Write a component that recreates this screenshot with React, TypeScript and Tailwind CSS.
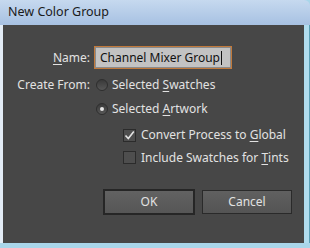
import React from "react";

const U = ({ children }: { children: React.ReactNode }) => (
  <span className="underline underline-offset-[2px] decoration-1">{children}</span>
);

function Radio({ checked }: { checked?: boolean }) {
  return (
    <div className="w-[12px] h-[12px] rounded-full border border-[#2e2e2e] bg-gradient-to-b from-[#3a3a3a] to-[#575757] flex items-center justify-center shrink-0">
      {checked && <div className="w-[4px] h-[4px] rounded-full bg-[#e6e6e6]" />}
    </div>
  );
}

function Check({ checked }: { checked?: boolean }) {
  return (
    <div className="w-[13px] h-[13px] border border-[#2b2b2b] bg-[#4e4e4e] flex items-center justify-center shrink-0">
      {checked && (
        <svg width="11" height="11" viewBox="0 0 11 11">
          <path d="M1.5 5.5 L4.3 8.5 L9.8 1.5" stroke="#e4e4e4" strokeWidth="1.6" fill="none" />
        </svg>
      )}
    </div>
  );
}

export default function App() {
  return (
    <div
      className="w-[310px] h-[248px] flex flex-col bg-[#a9d6ea] text-[12px] text-[#e2e2e2]"
      style={{ fontFamily: '"Noto Sans", "Open Sans", sans-serif' }}
    >
      <div className="h-[25px] shrink-0 flex items-center pl-[8px] bg-gradient-to-b from-[#c6d9ef] to-[#a7c1e2] text-[#1a1a1a] text-[12.5px] rounded-tr-[6px]">
        New Color Group
      </div>
      <div className="flex flex-1 mb-[5px]">
        <div className="w-[3px] bg-[#e3ecf6]" />
        <div className="flex-1 bg-[#474747] flex flex-col pt-[21px]">
          <div className="flex items-center h-[23px]">
            <div className="w-[88px] text-right pr-[1px]">
              <U>N</U>ame:
            </div>
            <div className="ml-[3px] w-[138px] h-[23px] border border-[#c27a3c] p-[1px] bg-[#8a8a8a]">
              <div className="w-full h-full bg-[#c3c3c3] text-[#111] flex items-center pl-[4px]">
                Channel Mixer Group<span className="inline-block w-[1px] h-[14px] bg-[#111] ml-[1px]" />
              </div>
            </div>
          </div>
          <div className="flex items-center h-[24px] mt-[4px]">
            <div className="w-[88px] text-right pr-[1px]">Create From:</div>
            <div className="ml-[5px]">
              <Radio />
            </div>
            <div className="ml-[4px]">
              Selected <U>S</U>watches
            </div>
          </div>
          <div className="flex items-center h-[23px]">
            <div className="w-[88px]" />
            <div className="ml-[5px]">
              <Radio checked />
            </div>
            <div className="ml-[4px]">
              Selected <U>A</U>rtwork
            </div>
          </div>
          <div className="flex items-center h-[22px] mt-[4px] pl-[120px]">
            <Check checked />
            <div className="ml-[5px]">
              Convert Process to <U>G</U>lobal
            </div>
          </div>
          <div className="flex items-center h-[23px] pl-[120px]">
            <Check />
            <div className="ml-[5px]">
              Include Swatches for <U>T</U>ints
            </div>
          </div>
          <div className="flex items-center mt-[20px] pl-[100px]">
            <button className="w-[92px] h-[26px] border-2 border-[#262626] bg-gradient-to-b from-[#626262] to-[#565656] text-[#e2e2e2]">
              OK
            </button>
            <button className="ml-[7px] w-[90px] h-[24px] border border-[#2a2a2a] bg-gradient-to-b from-[#606060] to-[#545454] text-[#e2e2e2]">
              Cancel
            </button>
          </div>
        </div>
        <div className="w-[6px] bg-[#b0dcee] border-r border-[#5a9fb5]" />
      </div>
    </div>
  );
}
